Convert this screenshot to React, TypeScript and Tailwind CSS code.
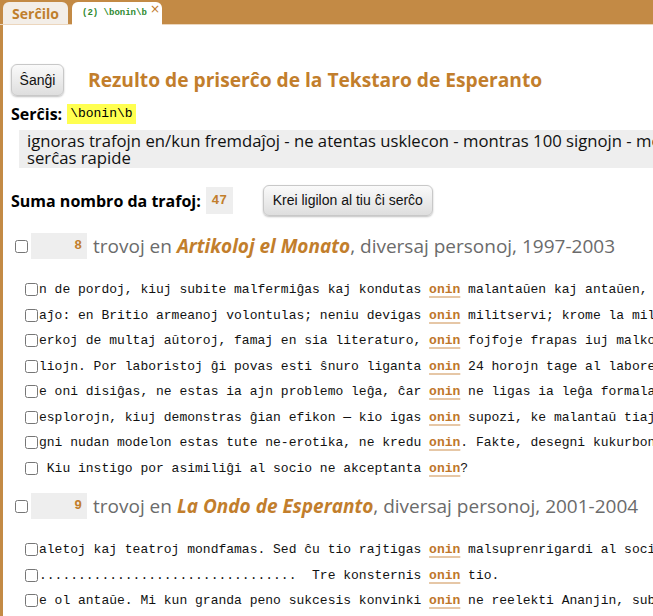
import React from 'react';

type Hit = { before: string; after: string };
type Group = { count: number; source: string; rest: string; hits: Hit[] };

const groups: Group[] = [
  {
    count: 8,
    source: 'Artikoloj el Monato',
    rest: ', diversaj personoj, 1997-2003',
    hits: [
      { before: 'n de pordoj, kiuj subite malfermiĝas kaj kondutas ', after: ' malantaŭen kaj antaŭen, kvazaŭ ili estus' },
      { before: 'aĵo: en Britio armeanoj volontulas; neniu devigas ', after: ' militservi; krome la militistaro pagas' },
      { before: 'erkoj de multaj aŭtoroj, famaj en sia literaturo, ', after: ' fojfoje frapas iuj malkonataj nomoj' },
      { before: 'liojn. Por laboristoj ĝi povas esti ŝnuro liganta ', after: ' 24 horojn tage al laborejo kaj estro' },
      { before: 'e oni disiĝas, ne estas ia ajn problemo leĝa, ĉar ', after: ' ne ligas ia leĝa formalaĵo aŭ kontrakto' },
      { before: 'esplorojn, kiuj demonstras ĝian efikon — kio igas ', after: ' supozi, ke malantaŭ tiaj asertoj kuŝas' },
      { before: 'gni nudan modelon estas tute ne-erotika, ne kredu ', after: '. Fakte, desegni kukurbon aŭ tablon estas' },
      { before: ' Kiu instigo por asimiliĝi al socio ne akceptanta ', after: '?' },
    ],
  },
  {
    count: 9,
    source: 'La Ondo de Esperanto',
    rest: ', diversaj personoj, 2001-2004',
    hits: [
      { before: 'aletoj kaj teatroj mondfamas. Sed ĉu tio rajtigas ', after: ' malsuprenrigardi al socioj kun malpli' },
      { before: '.................................  Tre konsternis ', after: ' tio.' },
      { before: 'e ol antaŭe. Mi kun granda peno sukcesis konvinki ', after: ' ne reelekti Ananjin, sub kies gvido' },
    ],
  },
];

const sans = "font-['Open_Sans','Noto_Sans',sans-serif]";
const mono = "font-['Liberation_Mono','Courier_New',monospace]";
const btn =
  "font-['Liberation_Sans',Arial,sans-serif] text-[14px] text-[#111] rounded-[6px] border border-[#c8c8c8] bg-gradient-to-b from-[#fafafa] to-[#dedede] shadow-[0_1px_2px_rgba(0,0,0,0.25)]";

const App: React.FC = () => {
  return (
    <div className="w-[653px] h-[616px] overflow-hidden bg-[#c38a45] flex flex-col">
      <div className="h-[25px] shrink-0 flex items-end gap-[4px] pl-[3px] border-b border-[#ecd6bd]">
        <div className={`h-[22px] w-[65px] rounded-t-[6px] bg-[#f3eee8] flex items-center justify-center text-[14px] font-bold text-[#c07f2c] ${sans}`}>
          Serĉilo
        </div>
        <div className="h-[23px] w-[90px] rounded-t-[6px] bg-white flex items-center pl-[10px] relative -mb-px">
          <span className={`text-[9px] font-bold text-[#2f8a2f] ${mono}`}>(2) \bonin\b</span>
          <span className="absolute right-[2px] top-[1px] text-[12px] leading-none text-[#c0772a] font-['DejaVu_Sans',sans-serif]">×</span>
        </div>
      </div>

      <div className="flex-1 ml-[3px] bg-white overflow-hidden">
        <div className={`w-[1300px] pl-[8px] pt-[39px] text-black ${sans}`}>
          <div className="flex items-center gap-[24px]">
            <button className={`${btn} w-[53px] h-[32px]`}>Ŝanĝi</button>
            <h1 className="text-[19.2px] font-bold text-[#c27e2c] leading-none">
              Rezulto de priserĉo de la Tekstaro de Esperanto
            </h1>
          </div>

          <div className="mt-[8px] flex items-center gap-[5px] h-[20px]">
            <span className="text-[16px] font-bold">Serĉis:</span>
            <span className={`bg-[#ffff50] px-[3px] h-[20px] flex items-center text-[13px] ${mono}`}>\bonin\b</span>
          </div>

          <div className="mt-[6px] ml-[8px] w-[880px] bg-[#eeeeee] px-[8px] py-[2px] text-[16.7px] leading-[17px] text-[#111]">
            ignoras trafojn en/kun fremdaĵoj - ne atentas usklecon - montras 100 signojn - montras unu trovon po frazo -
            <br />
            serĉas rapide
          </div>

          <div className="mt-[17px] flex items-center h-[31px]">
            <span className="text-[16px] font-bold">Suma nombro da trafoj:</span>
            <span className={`ml-[5px] w-[27px] h-[27px] bg-[#eeeeee] flex items-center justify-center text-[13px] font-bold text-[#c27e2c] ${mono}`}>
              47
            </span>
            <button className={`${btn} ml-[30px] w-[170px] h-[31px]`}>Krei ligilon al tiu ĉi serĉo</button>
          </div>

          {groups.map((g, gi) => (
            <div key={g.source} className={gi === 0 ? 'mt-[17px]' : 'mt-[12px]'}>
              <div className="flex items-center h-[26px]">
                <input type="checkbox" className="ml-[4px] w-[13px] h-[13px] m-0" />
                <span className={`ml-[3px] w-[56px] h-[26px] bg-[#eeeeee] flex items-center justify-end pr-[5px] text-[13px] font-bold text-[#c27e2c] ${mono}`}>
                  {g.count}
                </span>
                <span className="ml-[6px] text-[19px] text-[#6b6b6b] whitespace-nowrap">
                  trovoj en <b className="italic text-[#c27e2c]">{g.source}</b>
                  {g.rest}
                </span>
              </div>
              <div className="mt-[18px]">
                {g.hits.map((h, i) => (
                  <div key={i} className="flex items-center h-[25.5px]">
                    <input type="checkbox" className="ml-[14px] w-[13px] h-[13px] m-0 shrink-0" />
                    <span className={`ml-[1px] whitespace-pre text-[13px] text-[#111] ${mono}`}>
                      {h.before}
                      <b className="text-[#c0772a] underline decoration-[#e6c7a6] decoration-2 underline-offset-[3px]">onin</b>
                      {h.after}
                    </span>
                  </div>
                ))}
              </div>
            </div>
          ))}
        </div>
      </div>
    </div>
  );
};

export default App;
